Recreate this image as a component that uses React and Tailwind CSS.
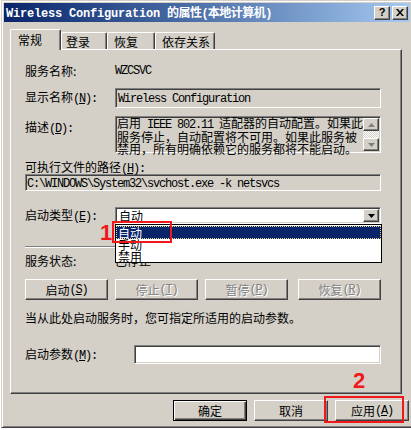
import React from "react";

const CJK = "font-['Noto_Sans_CJK_SC','Noto_Sans_CJK_JP',sans-serif]";
const raised =
  "bg-[#d4d0c8] border border-t-white border-l-white border-r-[#404040] border-b-[#404040] shadow-[inset_-1px_-1px_0_#808080]";
const sunkenGray =
  "bg-[#d4d0c8] border border-t-[#808080] border-l-[#808080] border-r-white border-b-white shadow-[inset_1px_1px_0_#404040]";
const sunkenWhite =
  "bg-white border border-t-[#808080] border-l-[#808080] border-r-white border-b-white shadow-[inset_1px_1px_0_#404040,inset_-1px_-1px_0_#d4d0c8]";

function M({ children, className = "" }) {
  return (
    <span className={"font-['Liberation_Mono',monospace] tracking-[-1.2px] " + className}>
      {children}
    </span>
  );
}

function Btn({ label, hot, disabled, className = "" }) {
  return (
    <div
      className={
        raised +
        " h-[21px] w-[83px] flex items-center justify-center text-[12px] leading-[14px] " +
        (disabled ? "text-[#808080] [text-shadow:1px_1px_0_#ffffff] " : "text-black ") +
        className
      }
    >
      <span>{label}</span>
      <M>
        (<span className="underline">{hot}</span>)
      </M>
    </div>
  );
}

function Tab({ children, selected, w, pl }) {
  return (
    <div
      className={
        (selected
          ? "h-[21px] -mb-[1px] pt-[3px] z-10 "
          : "h-[17px] pt-[2px] ") +
        "relative bg-[#d4d0c8] border-t border-l border-r border-t-white border-l-white border-r-[#404040] shadow-[inset_-1px_0_0_#808080] rounded-t-[2px] text-[12px] leading-[14px] text-black whitespace-nowrap"
      }
      style={{ width: w, paddingLeft: pl }}
    >
      {children}
    </div>
  );
}

export default function App() {
  return (
    <div className={"relative w-[411px] h-[430px] overflow-hidden bg-white " + CJK}>
      {/* window */}
      <div className="ml-[1px] w-[412px] h-[428px] bg-[#d4d0c8] border border-t-[#d4d0c8] border-l-[#d4d0c8] border-r-[#404040] border-b-[#404040] shadow-[inset_1px_1px_0_#ffffff,inset_-1px_-1px_0_#808080] p-[2px] flex flex-col">
        {/* title bar */}
        <div className="h-[19px] bg-gradient-to-r from-[#0a246a] to-[#a6caf0] flex items-center pl-[2px] pr-[2px]">
          <div className="flex-1 text-white font-bold text-[12px] leading-[14px] whitespace-nowrap">
            <span className="font-['Liberation_Mono',monospace] tracking-[-0.2px]">Wireless Configuration </span>
            <span className="tracking-[-0.5px]">的属性</span>
            <span className="font-['Liberation_Mono',monospace] tracking-[-1px]">(</span>
            <span className="tracking-[-0.5px]">本地计算机</span>
            <span className="font-['Liberation_Mono',monospace]">)</span>
          </div>
          <div className={raised + " w-[16px] h-[14px] flex items-center justify-center text-[11px] leading-[11px] font-bold text-black font-['Liberation_Sans',sans-serif]"}>
            ?
          </div>
          <div className={raised + " ml-[2px] w-[16px] h-[14px] flex items-center justify-center"}>
            <svg width="8" height="7" viewBox="0 0 8 7">
              <path d="M0 0h2l2 2.5L6 0h2L5 3.5 8 7H6L4 4.5 2 7H0l3-3.5z" fill="#000" />
            </svg>
          </div>
        </div>

        {/* body */}
        <div className="pt-[7px] pl-[6px]">
          {/* tabs */}
          <div className="flex items-end h-[20px] relative z-10">
            <Tab selected w={51} pl={7}>常规</Tab>
            <Tab w={46} pl={4}>登录</Tab>
            <Tab w={48} pl={6}>恢复</Tab>
            <Tab w={60} pl={6}>依存关系</Tab>
          </div>

          {/* panel */}
          <div className="w-[392px] h-[345px] border border-t-white border-l-white border-r-[#404040] border-b-[#404040] shadow-[inset_-1px_-1px_0_#808080] pl-[14px] text-[12px] leading-[14px] text-black">
            {/* service name */}
            <div className="mt-[12px] h-[18px] flex items-center">
              <div className="w-[90px]">服务名称:</div>
              <M>WZCSVC</M>
            </div>
            {/* display name */}
            <div className="mt-[8px] h-[20px] flex items-center">
              <div className="w-[90px] whitespace-nowrap">
                显示名称<M>(<span className="underline">N</span>):</M>
              </div>
              <div className={sunkenGray + " w-[266px] h-[20px] pl-[2px] pt-[1px]"}>
                <M>Wireless Configuration</M>
              </div>
            </div>
            {/* description */}
            <div className="mt-[8px] h-[37px] flex items-start">
              <div className="w-[90px] pt-[4px] whitespace-nowrap">
                描述<M>(<span className="underline">D</span>):</M>
              </div>
              <div className={sunkenGray + " w-[266px] h-[37px] flex"}>
                <div className="flex-1 pl-[1px] leading-[12px] whitespace-nowrap">
                  <div>
                    启用<M> IEEE 802.11 </M>适配器的自动配置。如果此
                  </div>
                  <div>服务停止，自动配置将不可用。如果此服务被</div>
                  <div>禁用，所有明确依赖它的服务都将不能启动。</div>
                </div>
                <div className="w-[16px] flex flex-col mr-[1px] mt-[1px] mb-[1px]">
                  <div className={raised + " h-[13px] flex items-center justify-center"}>
                    <svg width="7" height="4" viewBox="0 0 7 4">
                      <path d="M3.5 0L7 4H0z" fill="#808080" />
                    </svg>
                  </div>
                  <div className="flex-1 [background-image:repeating-conic-gradient(#ffffff_0_25%,#d4d0c8_0_50%)] [background-size:2px_2px]" />
                  <div className={raised + " h-[13px] flex items-center justify-center"}>
                    <svg width="7" height="4" viewBox="0 0 7 4">
                      <path d="M0 0h7L3.5 4z" fill="#808080" />
                    </svg>
                  </div>
                </div>
              </div>
            </div>
            {/* path */}
            <div className="mt-[7px] h-[14px] whitespace-nowrap">
              可执行文件的路径<M>(<span className="underline">H</span>):</M>
            </div>
            <div className={sunkenGray + " w-[356px] h-[17px] pl-[1px] leading-[14px] whitespace-nowrap"}>
              <M>C:\WINDOWS\System32\svchost.exe -k netsvcs</M>
            </div>
            {/* startup type */}
            <div className="mt-[16px] h-[17px] flex items-center">
              <div className="w-[90px] whitespace-nowrap">
                启动类型<M>(<span className="underline">E</span>):</M>
              </div>
              <div className="relative">
                <div className={sunkenWhite + " w-[266px] h-[17px] flex items-center"}>
                  <div className="flex-1 pl-[3px] leading-[13px]">自动</div>
                  <div className={raised + " w-[16px] h-[13px] mr-[1px] flex items-center justify-center"}>
                    <svg width="7" height="4" viewBox="0 0 7 4">
                      <path d="M0 0h7L3.5 4z" fill="#000" />
                    </svg>
                  </div>
                </div>
                {/* dropdown list */}
                <div className="absolute left-0 top-[17px] w-[267px] h-[39px] bg-white border border-black z-20 pt-[1px] leading-[12px] overflow-hidden">
                  <div className="h-[13px] bg-[#0a246a] text-white border border-dotted border-[#e8d890] pl-[1px] leading-[11px]">
                    自动
                  </div>
                  <div className="h-[12px] pl-[2px] leading-[12px]">手动</div>
                  <div className="h-[12px] pl-[2px] leading-[12px]">禁用</div>
                </div>
              </div>
            </div>
            {/* separator */}
            <div className="mt-[22px] w-[356px] h-[2px] border-t border-t-[#808080] border-b border-b-white" />
            {/* service status */}
            <div className="mt-[6px] h-[14px] flex items-center">
              <div className="w-[90px]">服务状态:</div>
              <div>已停止</div>
            </div>
            {/* buttons */}
            <div className="mt-[11px] flex">
              <Btn label="启动" hot="S" />
              <Btn label="停止" hot="T" disabled className="ml-[7px]" />
              <Btn label="暂停" hot="P" disabled className="ml-[7px]" />
              <Btn label="恢复" hot="R" disabled className="ml-[10px]" />
            </div>
            <div className="mt-[11px] h-[14px] whitespace-nowrap">
              当从此处启动服务时，您可指定所适用的启动参数。
            </div>
            <div className="mt-[20px] h-[19px] flex items-center">
              <div className="w-[109px] whitespace-nowrap">
                启动参数<M>(<span className="underline">M</span>):</M>
              </div>
              <div className={sunkenWhite + " w-[247px] h-[19px]"} />
            </div>
          </div>

          {/* dialog buttons */}
          <div className="mt-[6px] flex justify-end pr-[1px] text-[12px] leading-[14px] text-black">
            <div className="w-[74px] h-[21px] border border-black bg-[#d4d0c8] shadow-[inset_1px_1px_0_#ffffff,inset_-1px_-1px_0_#404040,inset_-2px_-2px_0_#808080] flex items-center justify-center">
              确定
            </div>
            <div className={raised + " ml-[7px] w-[74px] h-[21px] flex items-center justify-center"}>
              取消
            </div>
            <div className={raised + " ml-[7px] w-[74px] h-[21px] flex items-center justify-center whitespace-nowrap"}>
              应用<M>(<span className="underline">A</span>)</M>
            </div>
          </div>
        </div>
      </div>

      {/* annotations */}
      <div className="absolute left-[100px] top-[221px] text-[#f01818] font-bold text-[22px] leading-[24px] font-['Liberation_Sans',sans-serif]">
        1
      </div>
      <div className="absolute left-[112px] top-[221px] w-[60px] h-[22px] border-2 border-[#f01818] z-30" />
      <div className="absolute left-[353px] top-[369px] text-[#f01818] font-bold text-[22px] leading-[24px] font-['Liberation_Sans',sans-serif]">
        2
      </div>
      <div className="absolute left-[324px] top-[396px] w-[80px] h-[27px] border-2 border-[#f01818]" />
    </div>
  );
}
